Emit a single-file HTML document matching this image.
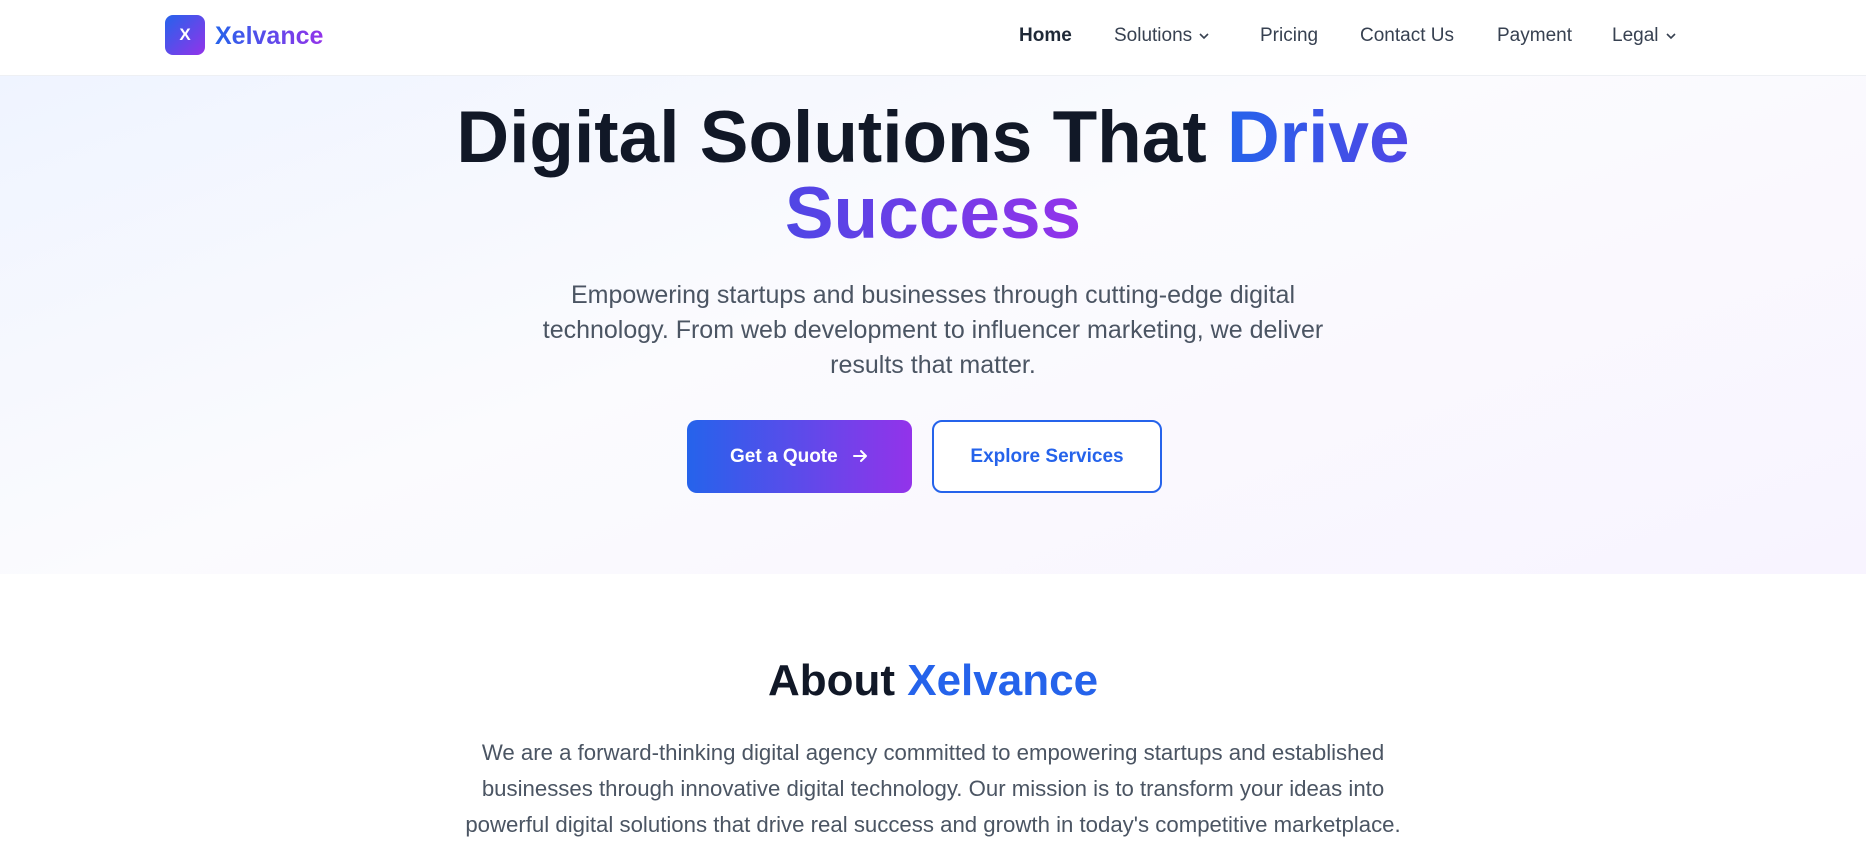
<!DOCTYPE html>
<html><head><meta charset="utf-8"><style>
*{margin:0;padding:0;box-sizing:border-box}
body{width:1866px;height:828px;overflow:hidden;font-family:"Liberation Sans",sans-serif;background:#fff;color:#111827}
header{position:absolute;top:0;left:0;width:1866px;height:76px;background:#fff;border-bottom:1px solid #eef0f4;z-index:2}
.logo{position:absolute;left:165px;top:15px;width:40px;height:40px;border-radius:8px;background:linear-gradient(135deg,#2563eb,#9333ea);color:#fff;font-weight:bold;font-size:17px;text-align:center;line-height:40px}
.brand{position:absolute;left:215px;top:22px;font-size:25px;font-weight:bold;background:linear-gradient(90deg,#2563eb,#9333ea);-webkit-background-clip:text;color:transparent}
nav a{position:absolute;top:25px;font-size:19px;color:#374151;text-decoration:none}
nav svg{vertical-align:middle;margin-left:6px}
.hero{position:absolute;top:76px;left:0;width:1866px;height:498px;background:linear-gradient(160deg,#eff4ff 0%,#fbfbfe 45%,#f8f4ff 100%)}
h1{position:absolute;top:100px;left:0;width:1866px;text-align:center;font-size:73px;line-height:76px;font-weight:bold;color:#111827}
.g{background:linear-gradient(90deg,#2563eb,#4f46e5);-webkit-background-clip:text;color:transparent}
.g2{background:linear-gradient(90deg,#4f46e5,#9333ea);-webkit-background-clip:text;color:transparent}
.sub{position:absolute;top:278px;left:513px;width:840px;text-align:center;font-size:25px;line-height:35px;color:#4b5563}
.btn1{position:absolute;left:687px;top:420px;width:225px;height:73px;border-radius:10px;background:linear-gradient(90deg,#2563eb,#9333ea);color:#fff;font-weight:bold;font-size:19px;line-height:73px;text-align:center}
.btn2{position:absolute;left:932px;top:420px;width:230px;height:73px;border-radius:10px;border:2px solid #2563eb;color:#2563eb;font-weight:bold;font-size:19px;line-height:69px;text-align:center;background:#fff}
h2{position:absolute;top:656px;left:0;width:1866px;text-align:center;font-size:44px;font-weight:bold;color:#111827}
.about{position:absolute;top:735px;left:453px;width:960px;text-align:center;font-size:22.2px;line-height:36px;color:#4b5563}
</style></head><body>
<header>
<div class="logo">X</div><div class="brand">Xelvance</div>
<nav>
<a style="left:1019px;font-weight:bold;color:#1f2937">Home</a>
<a style="left:1114px">Solutions<svg width="12" height="12" viewBox="0 0 12 12"><path d="M2 4l4 4 4-4" fill="none" stroke="#374151" stroke-width="1.6"/></svg></a>
<a style="left:1260px">Pricing</a>
<a style="left:1360px">Contact Us</a>
<a style="left:1497px">Payment</a>
<a style="left:1612px">Legal<svg width="12" height="12" viewBox="0 0 12 12"><path d="M2 4l4 4 4-4" fill="none" stroke="#374151" stroke-width="1.6"/></svg></a>
</nav>
</header>
<div class="hero"></div>
<h1>Digital Solutions That <span class="g">Drive</span><br><span class="g2">Success</span></h1>
<div class="sub">Empowering startups and businesses through cutting-edge digital technology. From web development to influencer marketing, we deliver results that matter.</div>
<div class="btn1">Get a Quote <svg width="18" height="18" viewBox="0 0 18 18" style="vertical-align:-3px;margin-left:8px"><path d="M3 9h12M10 4l5 5-5 5" fill="none" stroke="#fff" stroke-width="2" stroke-linecap="round" stroke-linejoin="round"/></svg></div>
<div class="btn2">Explore Services</div>
<h2>About <span style="color:#2563eb">Xelvance</span></h2>
<div class="about">We are a forward-thinking digital agency committed to empowering startups and established businesses through innovative digital technology. Our mission is to transform your ideas into powerful digital solutions that drive real success and growth in today's competitive marketplace.</div>
</body></html>
